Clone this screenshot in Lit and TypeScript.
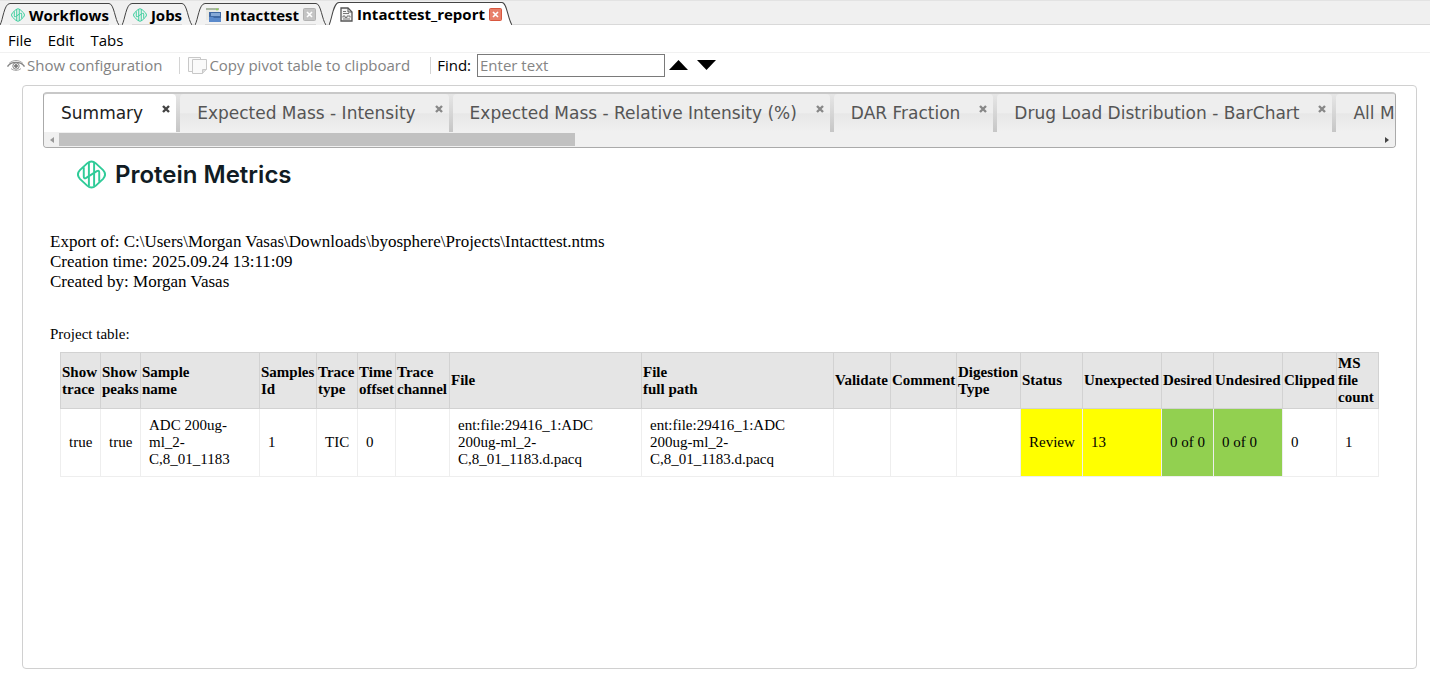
import { LitElement, html, css, svg, nothing } from "lit";
import { customElement } from "lit/decorators.js";

interface DocTab { label: string; icon: "brand" | "window" | "page"; closable: boolean; active: boolean }
interface Column { key: string; title: string[]; width: number; lines: string[]; tone?: string }

const DOC_TABS: DocTab[] = [
  { label: "Workflows", icon: "brand", closable: false, active: false },
  { label: "Jobs", icon: "brand", closable: false, active: false },
  { label: "Intacttest", icon: "window", closable: true, active: false },
  { label: "Intacttest_report", icon: "page", closable: true, active: true },
];

const SHEETS = [
  "Summary",
  "Expected Mass - Intensity",
  "Expected Mass - Relative Intensity (%)",
  "DAR Fraction",
  "Drug Load Distribution - BarChart",
  "All Masses",
];

const COLUMNS: Column[] = [
  { key: "trace", title: ["Show", "trace"], width: 40, lines: ["true"] },
  { key: "peaks", title: ["Show", "peaks"], width: 40, lines: ["true"] },
  { key: "sample", title: ["Sample", "name"], width: 119, lines: ["ADC 200ug-", "ml_2-", "C,8_01_1183"] },
  { key: "id", title: ["Samples", "Id"], width: 57, lines: ["1"] },
  { key: "type", title: ["Trace", "type"], width: 41, lines: ["TIC"] },
  { key: "offset", title: ["Time", "offset"], width: 38, lines: ["0"] },
  { key: "channel", title: ["Trace", "channel"], width: 54, lines: [] },
  { key: "file", title: ["File"], width: 192, lines: ["ent:file:29416_1:ADC", "200ug-ml_2-", "C,8_01_1183.d.pacq"] },
  { key: "path", title: ["File", "full path"], width: 192, lines: ["ent:file:29416_1:ADC", "200ug-ml_2-", "C,8_01_1183.d.pacq"] },
  { key: "validate", title: ["Validate"], width: 57, lines: [] },
  { key: "comment", title: ["Comment"], width: 66, lines: [] },
  { key: "digestion", title: ["Digestion", "Type"], width: 64, lines: [] },
  { key: "status", title: ["Status"], width: 62, lines: ["Review"], tone: "warn" },
  { key: "unexpected", title: ["Unexpected"], width: 79, lines: ["13"], tone: "warn" },
  { key: "desired", title: ["Desired"], width: 52, lines: ["0 of 0"], tone: "good" },
  { key: "undesired", title: ["Undesired"], width: 69, lines: ["0 of 0"], tone: "good" },
  { key: "clipped", title: ["Clipped"], width: 54, lines: ["0"] },
  { key: "count", title: ["MS", "file", "count"], width: 42, lines: ["1"] },
];

const brandMark = svg`
  <path d="M10.500 3.500 Q15 -.5 19.500 3.500 L27 10.500 Q31 15 27 19.500 L19.500 26.500 Q15 30.500 10.500 26.500 L3 19.500 Q-1 15 3 10.500 Z"/>
  <path d="M7 7.500 V17 Q7 19.800 9.500 18.500 L20.500 11.500 Q23 10.200 23 13 V22.500"/>
  <path d="M12.300 3 V16.500 M17.700 3 V13 M12.300 17 V27 M17.700 13.500 V27"/>`;

@customElement("app-root")
export class AppRoot extends LitElement {
  static styles = css`
    :host { display: flex; flex-direction: column; min-height: 100vh; box-sizing: border-box; background: #fff; color: #000; font-family: "Open Sans", "Noto Sans", sans-serif; font-size: 15px; }
    button, input { font: inherit; color: inherit; }
    button { background: none; border: 0; padding: 0; display: flex; align-items: center; }
    .doc-tabs { display: flex; align-items: flex-end; height: 25px; box-sizing: border-box; background: #f0f0f0; border-top: 1px solid #e3e3e3; box-shadow: inset 0 -1px #d9d9d9; }
    .doc-tab { display: flex; height: 22px; margin-right: 3px; }
    .doc-tab.active { height: 23px; }
    .edge { width: 10px; height: 100%; flex: none; stroke: #444; fill: #f2f2f2; }
    .face { display: flex; align-items: center; padding-left: 1px; border-top: 1px solid #444; background: #f2f2f2; box-sizing: border-box; box-shadow: inset 0 -1px #d9d9d9; }
    .active .face { background: #fff; box-shadow: none; }
    .active .edge { fill: #fff; }
    .face button { gap: 4px; font-weight: 700; line-height: 20px; white-space: nowrap; }
    .face .close { margin-left: 4px; }
    .icon { flex: none; display: block; }
    .mark { fill: none; stroke: #2fcb98; }
    .menu { display: flex; align-items: center; gap: 16px; height: 28px; padding: 2px 8px 0; box-sizing: border-box; border-bottom: 1px solid #f1f1f1; }
    .tools { display: flex; align-items: center; height: 24px; padding-left: 7px; color: #838383; white-space: nowrap; }
    .tools button { gap: 2px; }
    .rule { width: 1px; height: 17px; background: #d4d4d4; }
    .rule.one { margin: 0 8px 0 17px; }
    .rule.two { margin: 0 6px 0 20px; }
    .tools label { color: #000; }
    .find { width: 188px; height: 23px; box-sizing: border-box; border: 1px solid #7a7a7a; padding: 0 2px; margin: 0 4px 0 6px; background: #fff; color: #000; border-radius: 0; }
    .find::placeholder { color: #858585; opacity: 1; }
    .tools .arrow + .arrow { margin-left: 9px; }
    .panel { flex: 1; margin: 8px 13px 10px 22px; border: 1px solid #d0d0d0; border-radius: 4px; padding: 6px 20px 0 20px; min-width: 0; }
    .sheets { border: 1px solid #aaa; border-top: 2px solid #c8c8c8; border-radius: 4px; background: #f0f0f0; overflow: hidden; height: 56px; box-sizing: border-box; display: flex; flex-direction: column; }
    .sheet-row { display: flex; flex: 1; overflow: hidden; background: linear-gradient(#e6e6e6, #c6c6c6); }
    .sheet { flex: none; display: flex; align-items: flex-start; padding: 0 6px 0 17px; margin-right: 4px; background: linear-gradient(#eeeeee 0 50%, #e7e7e7 52%, #f0f0f0); border-radius: 4px 4px 0 0; color: #555; font-family: "DejaVu Sans", sans-serif; font-size: 17px; }
    .sheet.on { background: #fff; color: #212121; }
    .sheet .name { line-height: 39px; white-space: nowrap; }
    .sheet .x { margin: 11px 0 0 19px; }
    .scroll { display: flex; align-items: center; height: 15px; background: #f0f0f0; padding: 0 5px; }
    .thumb { flex: 0 1 516px; height: 13px; background: #c1c1c1; margin-left: 4px; margin-right: auto; }
    .report { padding: 0 17px 0 7px; font-family: "Liberation Serif", serif; font-size: 17px; }
    .brand { display: flex; align-items: center; gap: 9px; padding: 11px 0 0 27px; height: 42px; box-sizing: border-box; }
    .brand span { font: 600 24px/32px Inter, sans-serif; color: #111c24; }
    .meta { margin: 42px 0 0; line-height: 20px; }
    .caption { margin: 33px 0 0; font-size: 15px; line-height: 18px; }
    .grid { width: calc(100% - 10px); margin: 9px 0 0 10px; table-layout: fixed; border-collapse: collapse; font-size: 15px; line-height: 17px; }
    .grid th { background: #e5e5e5; border: 1px solid #d2d2d2; text-align: left; padding: 2px 1px; height: 51px; white-space: nowrap; }
    .grid td { border: 1px solid #eee; padding: 8px; height: 51px; white-space: nowrap; }
    .grid .warn { background: #ff0; }
    .grid .good { background: #92d050; }
  `;

  private mark(size: number, w: number) {
    return html`<svg class="icon mark" width=${size} height=${size} viewBox="0 0 30 30" stroke-width=${w} aria-hidden="true">${brandMark}</svg>`;
  }

  private tabIcon(kind: DocTab["icon"]) {
    if (kind === "brand") return this.mark(14, 2);
    if (kind === "window")
      return html`<svg class="icon" width="15" height="14" viewBox="0 0 15 14" aria-hidden="true">
        <rect width="13" height="12" fill="#e9e9e4"/><rect width="13" height="2" fill="#a9b7a2"/><circle cx="11" cy="1.5" r="1" fill="#8bd14c"/>
        <rect x="3" y="4" width="12" height="10" fill="#3f68a3"/><rect x="5" y="5" width="9" height="3" fill="#86a9d6"/><path d="M3 9h4l1 1h7v4H3z" fill="#5b8acb"/></svg>`;
    return html`<svg class="icon" width="13" height="15" viewBox="0 0 13 15" aria-hidden="true">
      <path d="M1 1h7l4 4v9H1z" fill="#f4f4f4" stroke="#555" stroke-width="1.3"/><path d="M8 1v4h4" fill="none" stroke="#555"/>
      <path d="M3 4.5h3M3 6.5h6M3 12h7" stroke="#777"/><path d="M3 10.5V9h2v1.500h2V9h3v1.500" fill="none" stroke="#777"/></svg>`;
  }

  private docTab(t: DocTab) {
    return html`<div class="doc-tab ${t.active ? "active" : ""}">
      <svg class="edge" viewBox="0 0 10 22" preserveAspectRatio="none" aria-hidden="true"><path d="M0 22 C3 17 4 .5 10 .5 V22Z" stroke="none"/><path d="M0 22 C3 17 4 .5 10 .5" fill="none"/></svg>
      <div class="face">
        <button type="button">${this.tabIcon(t.icon)}${t.label}</button>
        ${t.closable
          ? html`<button type="button" class="close" aria-label="Close ${t.label}"><svg class="icon" width="13" height="13" viewBox="0 0 13 13">
              <rect x=".5" y=".5" width="12" height="12" rx="1" fill=${t.active ? "#e8806a" : "#c4c4c4"} stroke=${t.active ? "#d8573f" : "#b2b2b2"}/>
              <path d="M4 4l5 5M9 4l-5 5" stroke="#fff" stroke-width="1.600"/></svg></button>`
          : nothing}
      </div>
      <svg class="edge" viewBox="0 0 10 22" preserveAspectRatio="none" aria-hidden="true"><path d="M0 .5 C5 .5 6 17 10 22 H0Z" stroke="none"/><path d="M0 .5 C5 .5 6 17 10 22" fill="none"/></svg>
    </div>`;
  }

  private lines(parts: string[]) {
    return parts.map((p, i) => (i ? html`<br />${p}` : p));
  }

  render() {
    return html`
      <nav class="doc-tabs" aria-label="Documents">${DOC_TABS.map((t) => this.docTab(t))}</nav>
      <nav class="menu" aria-label="Menu"><button type="button">File</button><button type="button">Edit</button><button type="button">Tabs</button></nav>
      <div class="tools">
        <button type="button"><svg class="icon" width="18" height="13" viewBox="0 0 18 13" fill="none" stroke="#858585" aria-hidden="true">
          <path d="M.5 7.500C4 2 14 2 17.500 7.500" stroke-width="1.400"/><path d="M2 4.500C6 .5 12 .5 16 4.500M4 9.500C6.500 12 11.500 12 14 9.500" stroke="#a5a5a5"/><circle cx="9" cy="7" r="3.200"/><circle cx="9" cy="7" r="1.500" fill="#777"/></svg>Show configuration</button>
        <span class="rule one"></span>
        <button type="button"><svg class="icon" width="19" height="19" viewBox="0 0 19 19" fill="#fafafa" stroke="#c8c8c8" aria-hidden="true">
          <path d="M.5 1.500h12v14H.5z"/><path d="M4.500 3.500h14v10l-4 4h-10z"/><path d="M14.500 17.500v-4h4" fill="#ddd"/></svg>Copy pivot table to clipboard</button>
        <span class="rule two"></span>
        <label for="find">Find:</label><input id="find" class="find" type="text" placeholder="Enter text" />
        <button type="button" class="arrow" aria-label="Previous match"><svg class="icon" width="19" height="10" viewBox="0 0 19 10"><path d="M0 10L9.500 0L19 10Z" fill="#000"/></svg></button>
        <button type="button" class="arrow" aria-label="Next match"><svg class="icon" width="19" height="10" viewBox="0 0 19 10"><path d="M0 0L9.500 10L19 0Z" fill="#000"/></svg></button>
      </div>
      <main class="panel">
        <div class="sheets">
          <div class="sheet-row">
            ${SHEETS.map((s, i) => html`<div class="sheet ${i === 0 ? "on" : ""}"><button type="button" class="name">${s}</button>
              <button type="button" class="x" aria-label="Close ${s}"><svg class="icon" width="8" height="8" viewBox="0 0 8 8"><path d="M1 1l6 6M7 1l-6 6" stroke=${i === 0 ? "#444" : "#888"} stroke-width="2.400"/></svg></button></div>`)}
          </div>
          <div class="scroll" aria-hidden="true">
            <svg class="icon" width="6" height="8" viewBox="0 0 6 8"><path d="M5 1v6L1 4z" fill="#999"/></svg>
            <div class="thumb"></div>
            <svg class="icon" width="6" height="8" viewBox="0 0 6 8"><path d="M1 1v6L5 4z" fill="#444"/></svg>
          </div>
        </div>
        <div class="report">
          <div class="brand">${this.mark(29, 2)}<span>Protein Metrics</span></div>
          <p class="meta">Export of: C:\\Users\\Morgan Vasas\\Downloads\\byosphere\\Projects\\Intacttest.ntms<br />Creation time: 2025.09.24 13:11:09<br />Created by: Morgan Vasas</p>
          <p class="caption">Project table:</p>
          <table class="grid">
            <colgroup>${COLUMNS.map((c) => html`<col style="width:${c.width}px" />`)}</colgroup>
            <thead><tr>${COLUMNS.map((c) => html`<th scope="col">${this.lines(c.title)}</th>`)}</tr></thead>
            <tbody><tr>${COLUMNS.map((c) => html`<td class=${c.tone ?? ""}>${this.lines(c.lines)}</td>`)}</tr></tbody>
          </table>
        </div>
      </main>`;
  }
}
